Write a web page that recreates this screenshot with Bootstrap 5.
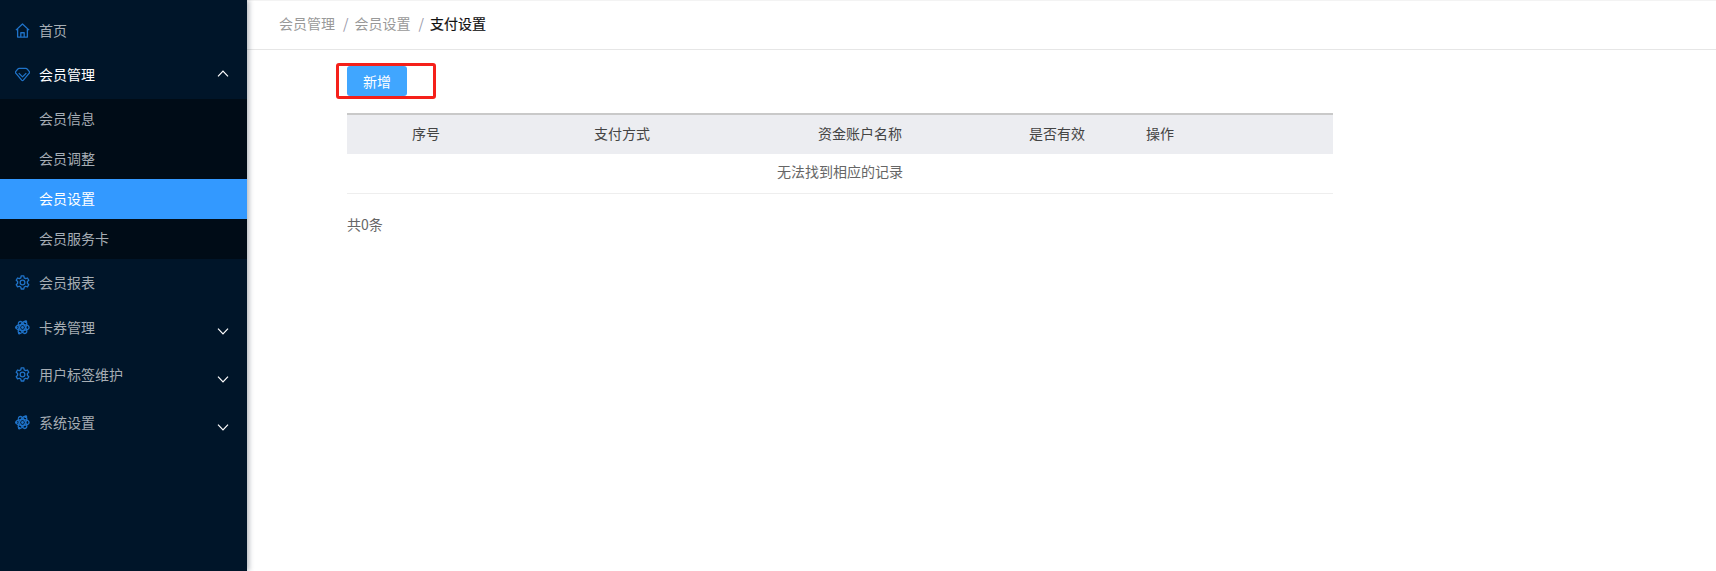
<!DOCTYPE html>
<html lang="zh-CN">
<head>
<meta charset="utf-8">
<title>支付设置</title>
<link rel="stylesheet" href="https://cdn.jsdelivr.net/npm/bootstrap@5.3.0/dist/css/bootstrap.min.css">
<style>
html,body{height:100%;}
body{font-family:"Noto Sans CJK SC","Liberation Sans",sans-serif;font-size:14px;color:#555;background:#fff;overflow:hidden;}
.shell{height:571px;}
.side{width:247px;flex:none;background:#001529;padding-top:8px;box-shadow:2px 0 5px rgba(0,21,41,.3);z-index:2;}
.mrow{height:44px;padding:0 18px 0 15px;color:#a6adb4;text-decoration:none;}
.mrow:hover{color:#a6adb4;}
.mrow.open{color:#fff;height:46px;padding-bottom:2px;}
.mrow svg.ico{width:15px;height:15px;margin-right:9px;flex:none;fill:none;stroke:#1f73c9;stroke-width:1.4;stroke-linejoin:round;}
.mrow svg.ico .dot{fill:#1f73c9;stroke:none;}
.mrow svg.chev{width:12px;height:7px;fill:none;stroke:#fff;stroke-width:1.2;margin-top:8px;}
.mrow.open svg.chev{margin-top:-2px;}
.gap-t{margin-top:4px;padding-bottom:2px;}
.mrow.gap-t svg.chev{margin-top:10px;}
.after-sub{margin-top:2px;padding-bottom:2px;}
.subm{background:#000c17;margin-top:1px;}
.subm a{display:block;height:40px;line-height:39px;padding-left:39px;color:#a6adb4;text-decoration:none;}
.subm a.on{background:#3399ff;color:#fff;}
.crumbs{height:50px;padding:0 0 3px 32px;border-top:1px solid #f3f3f3;border-bottom:1px solid #e6e6e6;color:#999;}
.crumbs i{font-style:normal;margin:0 6px 0 8px;color:#99a;}
.crumbs b{font-weight:400;color:#111;-webkit-text-stroke:.2px #111;}
.work{padding:13px 0 0 100px;width:1086px;}
.redbox{width:100px;height:36px;margin-left:-11px;border:3px solid #f5201a;border-radius:3px;padding-left:8px;}
.addbtn{width:60px;height:30px;padding:0;border:0;border-radius:3px;background:#40a6ff;color:#fff;font-size:14px;}
.addbtn:hover{background:#40a6ff;color:#fff;}
.grid{table-layout:fixed;width:986px;margin:14px 0 0;color:#555;}
.grid>thead>tr>th{height:40px;padding:0 0 3px;background:#ecedf1;border-top:2px solid #c9c9c9;border-bottom:0;font-weight:400;color:#444;text-align:center;vertical-align:middle;box-shadow:none;}
.grid>tbody>tr>td{height:39px;padding:0 0 3px;text-align:center;vertical-align:middle;border-bottom:1px solid #eee;color:#666;box-shadow:none;}
.c1{width:158px;}.c2{width:234px;}.c3{width:242px;}.c4{width:152px;}.c5{width:54px;}
.tot{margin-top:20px;color:#666;}
</style>
</head>
<body>
<div class="shell d-flex">
  <nav class="side">
    <a href="#" class="mrow d-flex align-items-center">
      <svg class="ico" viewBox="0 0 16 16"><path d="M1 7.600 8 1l7 6.600M2.800 6.200V15h10.400V6.200M6.200 15v-4.600h3.600V15"/></svg>首页</a>
    <a href="#" class="mrow open d-flex align-items-center">
      <svg class="ico" viewBox="0 0 16 16"><path d="M4.500 1.500h7q1 0 1.600.7l2.200 2.700q.6.800-.1 1.600L8.900 14q-.9 1-1.800 0L.8 6.500q-.7-.8-.1-1.600l2.200-2.700q.6-.7 1.600-.7z"/><path d="M4 6.500 8 10.500l4-4"/></svg><span class="flex-grow-1">会员管理</span>
      <svg class="chev" viewBox="0 0 12 7"><path d="M1 6.300 6 1l5 5.300"/></svg></a>
    <div class="subm">
      <a href="#">会员信息</a>
      <a href="#">会员调整</a>
      <a href="#" class="on">会员设置</a>
      <a href="#">会员服务卡</a>
    </div>
    <a href="#" class="mrow after-sub d-flex align-items-center">
      <svg class="ico" viewBox="0 0 16 16"><path d="M6.600 1h2.800l.4 2 1.600.9 1.900-.7 1.400 2.400-1.500 1.400v1.900l1.500 1.400-1.400 2.400-1.900-.7-1.600.9-.4 2H6.600l-.4-2-1.600-.9-1.900.7-1.400-2.400 1.500-1.400V7L1.300 5.600l1.400-2.400 1.900.7 1.600-.9z"/><circle cx="8" cy="8" r="2.500"/></svg>会员报表</a>
    <a href="#" class="mrow d-flex align-items-center">
      <svg class="ico" viewBox="0 0 16 16"><ellipse cx="8" cy="8" rx="7" ry="3" transform="rotate(60 8 8)"/><ellipse cx="8" cy="8" rx="7" ry="3" transform="rotate(-60 8 8)"/><ellipse cx="8" cy="8" rx="7" ry="3"/><circle class="dot" cx="8" cy="8" r="1.500"/><circle class="dot" cx="11.500" cy="1.800" r="1.500"/><circle class="dot" cx="1.500" cy="8" r="1.300"/><circle class="dot" cx="4.500" cy="14.200" r="1.300"/></svg><span class="flex-grow-1">卡券管理</span>
      <svg class="chev" viewBox="0 0 12 7"><path d="M1 .7 6 6l5-5.300"/></svg></a>
    <a href="#" class="mrow gap-t d-flex align-items-center">
      <svg class="ico" viewBox="0 0 16 16"><path d="M6.600 1h2.800l.4 2 1.600.9 1.900-.7 1.400 2.400-1.500 1.400v1.900l1.500 1.400-1.400 2.400-1.900-.7-1.600.9-.4 2H6.600l-.4-2-1.600-.9-1.900.7-1.400-2.400 1.500-1.400V7L1.300 5.600l1.400-2.400 1.900.7 1.600-.9z"/><circle cx="8" cy="8" r="2.500"/></svg><span class="flex-grow-1">用户标签维护</span>
      <svg class="chev" viewBox="0 0 12 7"><path d="M1 .7 6 6l5-5.300"/></svg></a>
    <a href="#" class="mrow gap-t d-flex align-items-center">
      <svg class="ico" viewBox="0 0 16 16"><ellipse cx="8" cy="8" rx="7" ry="3" transform="rotate(60 8 8)"/><ellipse cx="8" cy="8" rx="7" ry="3" transform="rotate(-60 8 8)"/><ellipse cx="8" cy="8" rx="7" ry="3"/><circle class="dot" cx="8" cy="8" r="1.500"/><circle class="dot" cx="11.500" cy="1.800" r="1.500"/><circle class="dot" cx="1.500" cy="8" r="1.300"/><circle class="dot" cx="4.500" cy="14.200" r="1.300"/></svg><span class="flex-grow-1">系统设置</span>
      <svg class="chev" viewBox="0 0 12 7"><path d="M1 .7 6 6l5-5.300"/></svg></a>
  </nav>
  <main class="flex-grow-1">
    <div class="crumbs d-flex align-items-center"><span>会员管理</span><i>/</i><span>会员设置</span><i>/</i><b>支付设置</b></div>
    <div class="work">
      <div class="redbox"><button type="button" class="btn addbtn">新增</button></div>
      <table class="table grid">
        <colgroup><col class="c1"><col class="c2"><col class="c3"><col class="c4"><col class="c5"><col></colgroup>
        <thead><tr><th>序号</th><th>支付方式</th><th>资金账户名称</th><th>是否有效</th><th>操作</th><th></th></tr></thead>
        <tbody><tr><td colspan="6">无法找到相应的记录</td></tr></tbody>
      </table>
      <div class="tot">共0条</div>
    </div>
  </main>
</div>
<script src="https://cdn.jsdelivr.net/npm/bootstrap@5.3.0/dist/js/bootstrap.bundle.min.js"></script>
</body>
</html>
